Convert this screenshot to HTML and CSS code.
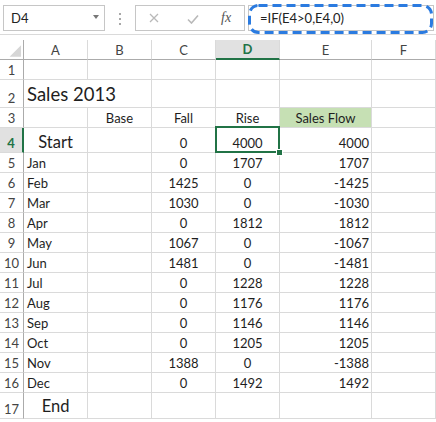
FILE: index.html
```html
<!DOCTYPE html>
<html>
<head>
<meta charset="utf-8">
<title>Sales 2013</title>
<link rel="stylesheet" href="styles.css">
</head>
<body>
<div class="app">
  <div class="formula-bar">
    <div class="name-box"><span>D4</span><span class="caret"></span></div>
    <div class="grip"><i></i><i></i><i></i></div>
    <div class="fx-box">
      <svg class="cancel" width="10" height="10" viewBox="0 0 10 10"><path d="M1 1L9 9M9 1L1 9" stroke="#b9b9b9" stroke-width="1.3" fill="none"/></svg>
      <svg class="enter" width="12" height="10" viewBox="0 0 12 10"><path d="M1 5.5L4.5 9L11 1.5" stroke="#b9b9b9" stroke-width="1.6" fill="none"/></svg>
      <span class="fx">fx</span>
    </div>
    <div class="formula-input">=IF(E4&gt;0,E4,0)
      <svg class="marquee" width="186" height="30" viewBox="0 0 186 30"><rect x="1.5" y="1.5" width="182" height="27" rx="9" ry="9" fill="none" stroke="#2b7be0" stroke-width="3" stroke-dasharray="9 5"/></svg>
    </div>
  </div>

  <div class="sheet">
    <div class="corner"><svg width="24" height="20" viewBox="0 0 24 20"><polygon points="22,5 22,17 10,17" fill="#d6d6d6"/></svg></div>
    <div class="ch">A</div><div class="ch">B</div><div class="ch">C</div><div class="ch sel-h">D</div><div class="ch">E</div><div class="ch">F</div>

    <div class="rh">1</div><div></div><div></div><div></div><div></div><div></div><div></div>
    <div class="rh">2</div><div class="title">Sales 2013</div><div></div><div></div><div></div><div></div>
    <div class="rh">3</div><div></div><div class="ctr">Base</div><div class="ctr">Fall</div><div class="ctr">Rise</div><div class="ctr fill">Sales Flow</div><div></div>
    <div class="rh sel-h">4</div><div class="ctr big">Start</div><div></div><div class="ctr">0</div><div class="ctr active">4000<span class="cursor"><span class="handle"></span></span></div><div class="rt">4000</div><div></div>
    <div class="rh">5</div><div>Jan</div><div></div><div class="ctr">0</div><div class="ctr">1707</div><div class="rt">1707</div><div></div>
    <div class="rh">6</div><div>Feb</div><div></div><div class="ctr">1425</div><div class="ctr">0</div><div class="rt">-1425</div><div></div>
    <div class="rh">7</div><div>Mar</div><div></div><div class="ctr">1030</div><div class="ctr">0</div><div class="rt">-1030</div><div></div>
    <div class="rh">8</div><div>Apr</div><div></div><div class="ctr">0</div><div class="ctr">1812</div><div class="rt">1812</div><div></div>
    <div class="rh">9</div><div>May</div><div></div><div class="ctr">1067</div><div class="ctr">0</div><div class="rt">-1067</div><div></div>
    <div class="rh">10</div><div>Jun</div><div></div><div class="ctr">1481</div><div class="ctr">0</div><div class="rt">-1481</div><div></div>
    <div class="rh">11</div><div>Jul</div><div></div><div class="ctr">0</div><div class="ctr">1228</div><div class="rt">1228</div><div></div>
    <div class="rh">12</div><div>Aug</div><div></div><div class="ctr">0</div><div class="ctr">1176</div><div class="rt">1176</div><div></div>
    <div class="rh">13</div><div>Sep</div><div></div><div class="ctr">0</div><div class="ctr">1146</div><div class="rt">1146</div><div></div>
    <div class="rh">14</div><div>Oct</div><div></div><div class="ctr">0</div><div class="ctr">1205</div><div class="rt">1205</div><div></div>
    <div class="rh">15</div><div>Nov</div><div></div><div class="ctr">1388</div><div class="ctr">0</div><div class="rt">-1388</div><div></div>
    <div class="rh">16</div><div>Dec</div><div></div><div class="ctr">0</div><div class="ctr">1492</div><div class="rt">1492</div><div></div>
    <div class="rh">17</div><div class="ctr big end">End</div><div></div><div></div><div></div><div></div><div></div>
  </div>
</div>
</body>
</html>
```

FILE: styles.css
```css
html, body {
  margin: 0;
  padding: 0;
  background: #fff;
}
body {
  width: 436px;
  height: 422px;
  overflow: hidden;
  font-family: Lato, "Liberation Sans", sans-serif;
}
.app {
  width: 436px;
}

/* formula bar */
.formula-bar {
  display: flex;
  align-items: flex-start;
  height: 35px;
  box-sizing: border-box;
  padding-top: 5px;
  border-bottom: 1px solid #dadada;
}
.name-box {
  margin-left: 3px;
  width: 102px;
  height: 26px;
  box-sizing: border-box;
  border: 1px solid #c6c6c6;
  display: flex;
  align-items: center;
  justify-content: space-between;
  padding: 0 5px 0 7px;
  font-size: 13px;
  line-height: 16px;
  color: #222;
}
.caret {
  width: 0;
  height: 0;
  border-left: 3.5px solid transparent;
  border-right: 3.5px solid transparent;
  border-top: 4px solid #777;
  margin-bottom: 2px;
}
.grip {
  margin-left: 14px;
  margin-top: 8px;
  display: flex;
  flex-direction: column;
  gap: 3px;
}
.grip i {
  display: block;
  width: 2px;
  height: 2px;
  background: #a8a8a8;
}
.fx-box {
  margin-left: 14px;
  width: 110px;
  height: 26px;
  box-sizing: border-box;
  border: 1px solid #c6c6c6;
  display: flex;
  align-items: center;
}
.cancel {
  margin-left: 13px;
}
.enter {
  margin-left: 28px;
  margin-top: 2px;
}
.fx {
  margin-left: 22px;
  font-family: "Liberation Serif", serif;
  font-style: italic;
  font-size: 14px;
  color: #555;
  line-height: 16px;
}
.formula-input {
  position: relative;
  margin-left: 3px;
  width: 186px;
  height: 26px;
  box-sizing: border-box;
  border: 1px solid #c6c6c6;
  padding-left: 11px;
  display: flex;
  align-items: center;
  font-size: 13px;
  line-height: 16px;
  color: #222;
  white-space: nowrap;
}
.marquee {
  position: absolute;
  left: -1px;
  top: -2px;
}

/* sheet grid */
.sheet {
  margin-top: 5px;
  display: grid;
  grid-template-columns: 24px 64px 64px 64px 64px 92px 64px;
  grid-template-rows: 20px 20px 28px 20px 25px repeat(12, 20px) 26px;
  font-size: 13px;
  line-height: 16px;
  color: #1e1e1e;
}
.sheet > div {
  box-sizing: border-box;
  border-right: 1px solid #dadada;
  border-bottom: 1px solid #dadada;
  display: flex;
  align-items: flex-end;
  padding: 0 3px 1px;
  white-space: nowrap;
}
.sheet > .corner {
  padding: 0;
  border-right-color: #ababab;
  border-bottom-color: #ababab;
  align-items: flex-start;
}
.corner svg {
  display: block;
}
.sheet > .ch {
  justify-content: center;
  border-bottom-color: #ababab;
  color: #444;
}
.sheet > .rh {
  justify-content: center;
  border-right-color: #ababab;
  color: #444;
  padding: 0 0 1px;
}
.sheet > .sel-h {
  background: #e1e1e1;
  color: #217346;
  font-weight: bold;
}
.sheet > .ch.sel-h {
  border-bottom: 2px solid #217346;
}
.sheet > .rh.sel-h {
  border-right: 2px solid #217346;
}
.sheet > .ctr {
  justify-content: center;
}
.sheet > .rt {
  justify-content: flex-end;
  padding-right: 2px;
}
.sheet > .title {
  grid-column: span 2;
  font-size: 18.5px;
  line-height: 22px;
  padding-bottom: 2px;
}
.sheet > .big {
  font-size: 16.5px;
  line-height: 20px;
  padding-bottom: 0;
}
.sheet > .end {
  padding-bottom: 2px;
}
.sheet > .fill {
  background: #c6e0b4;
}
.sheet > .active {
  position: relative;
}
.cursor {
  position: absolute;
  top: -2px;
  left: -1px;
  right: -1px;
  bottom: -1px;
  border: 2px solid #217346;
}
.handle {
  position: absolute;
  right: -5px;
  bottom: -5px;
  width: 5px;
  height: 5px;
  background: #217346;
  border: 1px solid #fff;
}
```
